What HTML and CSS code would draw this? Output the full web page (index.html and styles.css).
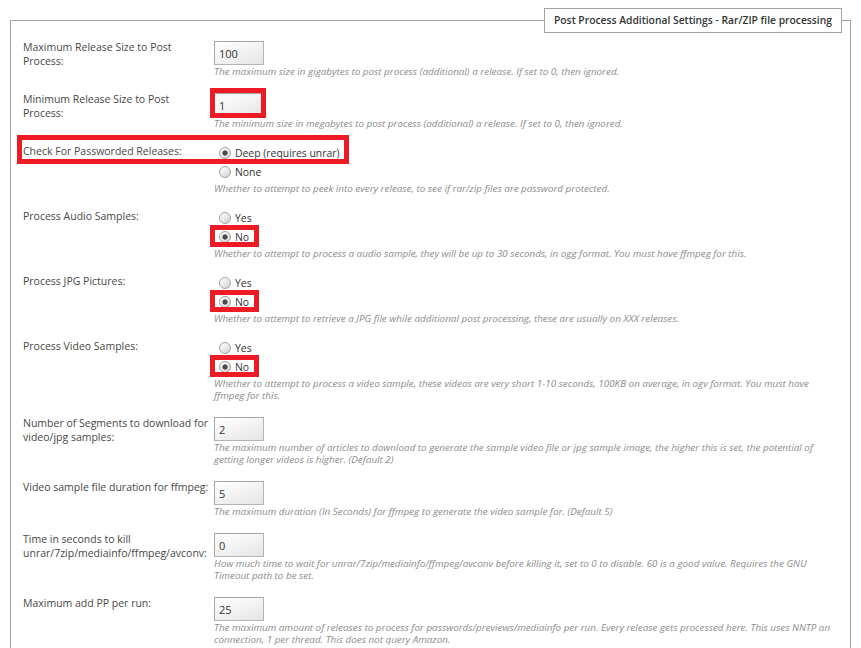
FILE: index.html
```html
<!DOCTYPE html>
<html>
<head>
<meta charset="utf-8">
<title>Post Process Additional Settings</title>
<link rel="stylesheet" href="styles.css">
</head>
<body>
<fieldset class="panel">
  <legend class="panel-title">Post Process Additional Settings - Rar/ZIP file processing</legend>

  <div class="row">
    <div class="label">Maximum Release Size to Post Process:</div>
    <div class="field">
      <input class="text-in" type="text" value="100">
      <div class="hint">The maximum size in gigabytes to post process (additional) a release. If set to 0, then ignored.</div>
    </div>
  </div>

  <div class="row">
    <div class="label">Minimum Release Size to Post Process:</div>
    <div class="field mark-input">
      <input class="text-in" type="text" value="1">
      <div class="hint">The minimum size in megabytes to post process (additional) a release. If set to 0, then ignored.</div>
    </div>
  </div>

  <div class="row mark-row">
    <div class="label">Check For Passworded Releases:</div>
    <div class="field">
      <div class="options">
        <label class="opt"><input class="radio" type="radio" name="pw" checked>Deep (requires unrar)</label>
        <label class="opt"><input class="radio" type="radio" name="pw">None</label>
      </div>
      <div class="hint">Whether to attempt to peek into every release, to see if rar/zip files are password protected.</div>
    </div>
  </div>

  <div class="row">
    <div class="label">Process Audio Samples:</div>
    <div class="field">
      <div class="options">
        <label class="opt"><input class="radio" type="radio" name="au">Yes</label>
        <label class="opt mark-opt"><input class="radio" type="radio" name="au" checked>No</label>
      </div>
      <div class="hint">Whether to attempt to process a audio sample, they will be up to 30 seconds, in ogg format. You must have ffmpeg for this.</div>
    </div>
  </div>

  <div class="row">
    <div class="label">Process JPG Pictures:</div>
    <div class="field">
      <div class="options">
        <label class="opt"><input class="radio" type="radio" name="jpg">Yes</label>
        <label class="opt mark-opt"><input class="radio" type="radio" name="jpg" checked>No</label>
      </div>
      <div class="hint">Whether to attempt to retrieve a JPG file while additional post processing, these are usually on XXX releases.</div>
    </div>
  </div>

  <div class="row">
    <div class="label">Process Video Samples:</div>
    <div class="field">
      <div class="options">
        <label class="opt"><input class="radio" type="radio" name="vid">Yes</label>
        <label class="opt mark-opt"><input class="radio" type="radio" name="vid" checked>No</label>
      </div>
      <div class="hint">Whether to attempt to process a video sample, these videos are very short 1-10 seconds, 100KB on average, in ogv format. You must have ffmpeg for this.</div>
    </div>
  </div>

  <div class="row">
    <div class="label">Number of Segments to download for video/jpg samples:</div>
    <div class="field">
      <input class="text-in" type="text" value="2">
      <div class="hint">The maximum number of articles to download to generate the sample video file or jpg sample image, the higher this is set, the potential of getting longer videos is higher. (Default 2)</div>
    </div>
  </div>

  <div class="row">
    <div class="label">Video sample file duration for ffmpeg:</div>
    <div class="field">
      <input class="text-in" type="text" value="5">
      <div class="hint">The maximum duration (In Seconds) for ffmpeg to generate the video sample for. (Default 5)</div>
    </div>
  </div>

  <div class="row">
    <div class="label">Time in seconds to kill unrar/7zip/mediainfo/ffmpeg/avconv:</div>
    <div class="field">
      <input class="text-in" type="text" value="0">
      <div class="hint">How much time to wait for unrar/7zip/mediainfo/ffmpeg/avconv before killing it, set to 0 to disable. 60 is a good value. Requires the GNU Timeout path to be set.</div>
    </div>
  </div>

  <div class="row">
    <div class="label">Maximum add PP per run:</div>
    <div class="field">
      <input class="text-in" type="text" value="25">
      <div class="hint">The maximum amount of releases to process for passwords/previews/mediainfo per run. Every release gets processed here. This uses NNTP an connection, 1 per thread. This does not query Amazon.</div>
    </div>
  </div>
</fieldset>
</body>
</html>
```
FILE: styles.css
```css
html, body {
  background: #fff;
}
body {
  margin: 8px;
  font-family: "Open Sans", "Noto Sans", sans-serif;
  color: #444;
}
.panel {
  margin: 0 2px;
  border: 1px solid #a3a3a3;
  padding: 8px 12px 10px 12px;
  min-width: 0;
}
.panel-title {
  margin-left: auto;
  margin-right: -4px;
  border: 1px solid #a3a3a3;
  background: #fff;
  padding: 0 9px;
  height: 25px;
  box-sizing: border-box;
  line-height: 23px;
  font-size: 10.3px;
  font-weight: 600;
  color: #333;
}
.row {
  display: grid;
  grid-template-columns: 188px 1fr;
  column-gap: 3px;
  margin-bottom: 16px;
  position: relative;
}
.label {
  font-size: 10.5px;
  line-height: 14px;
  margin-top: -1px;
  color: #474747;
}
.field {
  position: relative;
  min-width: 0;
}
.text-in {
  display: block;
  box-sizing: border-box;
  width: 50px;
  height: 24px;
  margin: 0;
  padding: 0 4px;
  border: 1px solid #b4b4b4;
  border-top-color: #a6a6a6;
  border-left-color: #a6a6a6;
  border-radius: 0;
  background: linear-gradient(160deg, #ffffff 0%, #f4f4f4 45%, #e4e4e4 100%);
  font-family: "Open Sans", "Noto Sans", sans-serif;
  font-size: 11px;
  color: #333;
  outline: none;
}
.hint {
  font-size: 9.85px;
  line-height: 12px;
  font-style: italic;
  color: #8c8c8c;
}
.options {
  margin-top: -1px;
}
.opt {
  display: block;
  position: relative;
  height: 19px;
  line-height: 19px;
  font-size: 10.4px;
  color: #333;
  white-space: nowrap;
}
.radio {
  -webkit-appearance: none;
  appearance: none;
  box-sizing: border-box;
  width: 12px;
  height: 12px;
  margin: 0 4px 0 5px;
  vertical-align: -2px;
  border: 1px solid #a2a2a2;
  border-radius: 50%;
  background: linear-gradient(135deg, #ffffff 0%, #ececec 45%, #cfcfcf 100%);
}
.radio:checked {
  background:
    radial-gradient(circle at 50% 50%, #4a4a4a 0, #4a4a4a 2.2px, rgba(74,74,74,0) 3px),
    linear-gradient(135deg, #ffffff 0%, #ececec 45%, #cfcfcf 100%);
}
.mark-input::after,
.mark-row::after,
.mark-opt::after {
  content: "";
  position: absolute;
  box-sizing: border-box;
  border: 5px solid #ed1c24;
  pointer-events: none;
}
.mark-input::after {
  left: -4px;
  top: -5px;
  width: 56px;
  height: 30px;
}
.mark-row::after {
  left: -6px;
  top: -10px;
  width: 332px;
  height: 29px;
}
.mark-opt::after {
  left: -4px;
  top: -3px;
  width: 49px;
  height: 22px;
}
```
